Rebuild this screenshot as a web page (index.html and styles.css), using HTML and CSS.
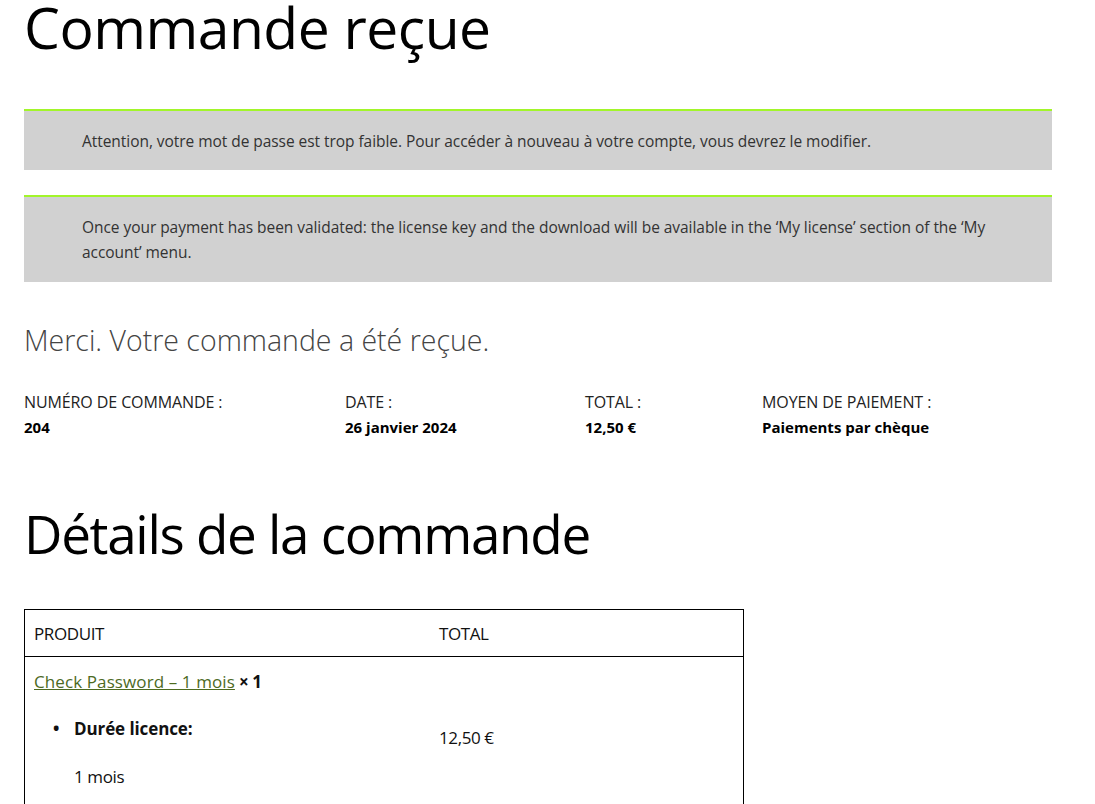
FILE: index.html
```html
<!DOCTYPE html>
<html lang="fr">
<head>
<meta charset="utf-8">
<title>Commande reçue</title>
<link rel="stylesheet" href="styles.css">
</head>
<body>
<main class="page">
  <h1 class="page-title">Commande reçue</h1>

  <div class="notice">
    <p>Attention, votre mot de passe est trop faible. Pour accéder à nouveau à votre compte, vous devrez le modifier.</p>
  </div>
  <div class="notice">
    <p>Once your payment has been validated: the license key and the download will be available in the ‘My license’ section of the ‘My account’ menu.</p>
  </div>

  <p class="thankyou">Merci. Votre commande a été reçue.</p>

  <ul class="overview">
    <li class="ov-item"><span class="ov-label">Numéro de commande :</span><strong>204</strong></li>
    <li class="ov-item"><span class="ov-label">Date :</span><strong>26 janvier 2024</strong></li>
    <li class="ov-item"><span class="ov-label">Total :</span><strong>12,50 €</strong></li>
    <li class="ov-item"><span class="ov-label">Moyen de paiement :</span><strong>Paiements par chèque</strong></li>
  </ul>

  <h2 class="details-title">Détails de la commande</h2>

  <table class="order-table">
    <thead>
      <tr>
        <th class="col-product">Produit</th>
        <th class="col-total">Total</th>
      </tr>
    </thead>
    <tbody>
      <tr>
        <td class="col-product">
          <a class="product-link" href="#">Check Password – 1 mois</a> <strong class="qty">× 1</strong>
          <ul class="meta">
            <li class="meta-item"><strong>Durée licence:</strong>
              <p class="meta-value">1 mois</p>
            </li>
          </ul>
        </td>
        <td class="col-total">12,50 €</td>
      </tr>
    </tbody>
  </table>
</main>
</body>
</html>
```

FILE: styles.css
```css
html, body {
  margin: 0;
  padding: 0;
  background: #fff;
}

body {
  font-family: "Open Sans", "Noto Sans", sans-serif;
  color: #111;
  font-size: 15px;
}

.page {
  padding: 0 43px 0 24px;
}

.page-title {
  margin: 0;
  font-weight: 400;
  font-size: 57px;
  line-height: 54px;
  letter-spacing: -0.5px;
  color: #000;
}

.notice {
  margin-top: 55px;
  background: #d1d1d1;
  border-top: 2px solid #a2f52a;
  padding: 18px 48px 16px 58px;
  color: #333;
  font-size: 15.5px;
  line-height: 25px;
  letter-spacing: -0.05px;
}

.notice + .notice {
  margin-top: 25px;
  padding-bottom: 17px;
}

.notice p {
  margin: 0;
}

.thankyou {
  margin: 38px 0 0;
  font-size: 28.5px;
  font-weight: 300;
  color: #444;
  line-height: 40px;
}

.overview {
  list-style: none;
  margin: 32px 0 0;
  padding: 0;
  display: grid;
  grid-template-columns: 321px 240px 177px auto;
  font-size: 15px;
}

.ov-item {
  display: flex;
  flex-direction: column;
  gap: 5px;
  line-height: 20px;
}

.ov-label {
  text-transform: uppercase;
  color: #222;
  font-size: 16px;
  letter-spacing: -0.1px;
}

.ov-item strong {
  font-weight: 700;
  color: #000;
}

.details-title {
  margin: 67px 0 0;
  font-weight: 400;
  font-size: 53px;
  line-height: 60px;
  letter-spacing: -1.3px;
  color: #000;
}

.order-table {
  margin-top: 45px;
  width: 720px;
  border-collapse: collapse;
  border: 1px solid #000;
  font-size: 17px;
  color: #111;
}

.order-table th {
  text-align: left;
  font-weight: 400;
  text-transform: uppercase;
  padding: 12px 9px 11px;
  line-height: 23px;
  border-bottom: 1px solid #000;
  letter-spacing: -0.4px;
}

.order-table .col-product {
  width: 387px;
}

.order-table td {
  padding: 13px 9px;
  vertical-align: middle;
  line-height: 23px;
  letter-spacing: -0.4px;
}

.order-table td.col-product {
  vertical-align: top;
}

.product-link {
  color: #4d6a1f;
  text-decoration: underline;
  letter-spacing: 0.1px;
}

.qty {
  font-weight: 700;
}

.meta {
  margin: 24px 0 16px;
  padding-left: 40px;
  list-style: none;
}

.meta-item strong {
  font-weight: 700;
  letter-spacing: -0.1px;
}

.meta-item::before {
  content: "•";
  display: inline-block;
  width: 21px;
  margin-left: -21px;
  font-weight: 700;
}

.meta-value {
  margin: 25px 0 0;
}
```
